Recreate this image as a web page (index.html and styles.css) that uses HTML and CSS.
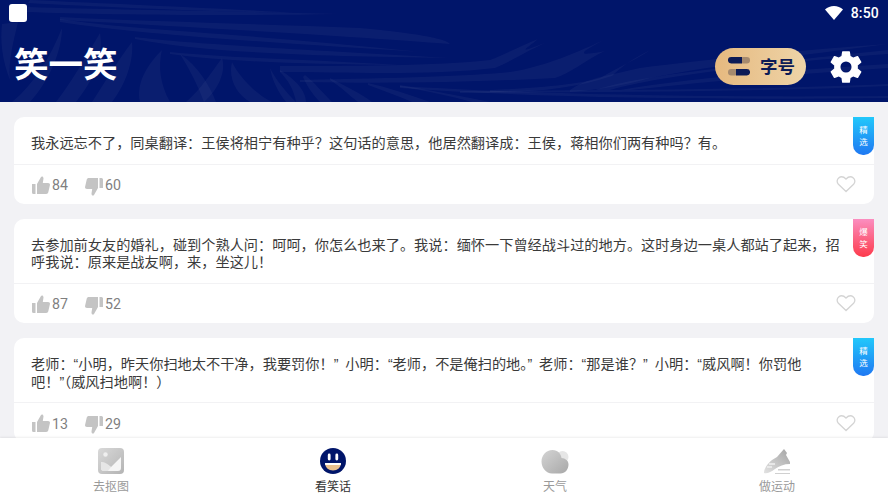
FILE: index.html
```html
<!DOCTYPE html>
<html lang="zh-CN">
<head>
<meta charset="utf-8">
<title>笑一笑</title>
<link rel="stylesheet" href="styles.css">
</head>
<body>
<div class="app">
  <header class="header">
    <svg class="header-art" viewBox="0 0 888 102" preserveAspectRatio="none" aria-hidden="true">
      <g fill="#fff" fill-opacity=".04">
        <path d="M30 0 C120 4 230 9 300 13 C220 12 100 7 28 3Z"/>
        <path d="M28 7 C120 10 240 11 340 14 C240 16 100 15 27 12Z"/>
        <path d="M60 17 C160 22 270 24 360 28 C450 36 450 44 450 44 C400 40 250 30 60 20Z"/>
        <path d="M60 19 C130 30 230 32 420 52 C300 44 150 36 60 22Z"/>
        <path d="M135 37 C190 44 280 48 450 58 C300 56 200 52 135 39Z"/>
        <path d="M170 52 C230 58 300 59 400 65 C300 64 230 62 170 54Z"/>
        <path d="M280 66 C340 66 440 66 490 60 C510 52 525 44 538 39 C525 50 515 54 545 43 C525 52 510 62 495 68 C430 76 340 72 280 72Z"/>
        <path d="M300 80 C400 78 470 76 510 72 C550 66 590 46 604 40 C585 50 570 58 605 51 C585 60 570 74 555 78 C480 82 400 84 300 82Z"/>
        <path d="M490 90 C540 88 580 84 600 78 C620 66 640 58 650 50 C630 60 620 68 612 76 C570 90 530 92 490 92Z"/>
        <path d="M570 90 C585 80 595 78 640 68 C700 60 800 50 888 44 C800 56 720 64 650 78 C630 84 600 90 570 92Z"/>
        <path d="M595 90 C640 76 700 70 888 50 L888 54 C760 64 660 76 610 90Z"/>
        <path d="M620 90 C700 76 800 70 888 64 L888 68 C800 74 720 80 630 90Z"/>
        <path d="M460 91 C600 90 760 90 888 84 L888 86 C760 92 620 92 460 93Z"/>
        <path d="M400 86 C500 92 650 98 888 96 L888 98 C700 100 540 98 400 88Z"/>
        <path d="M280 70 C300 82 306 94 306 102 L296 102 C294 90 288 80 280 72Z"/>
        <path d="M305 75 C316 84 322 92 332 102 L320 102 C312 94 306 84 303 77Z"/>
        <path d="M330 78 C345 86 362 94 372 102 L358 102 C350 96 340 86 330 80Z"/>
        <path d="M368 83 C390 88 410 95 430 102 L412 102 C398 96 382 90 368 85Z"/>
        <path d="M400 85 C430 90 460 96 490 102 L472 102 C450 96 424 90 400 87Z"/>
        <path d="M2 24 L18 22 C14 40 8 60 10 80 C2 60 0 40 2 24Z"/>
        <path d="M62 28 C50 58 34 84 12 102 L30 102 C50 80 62 50 62 28Z"/>
        <path d="M100 33 C84 60 70 84 56 102 L76 102 C94 80 104 55 100 33Z"/>
        <path d="M132 42 C118 60 104 84 92 102 L112 102 C126 84 134 60 132 42Z"/>
        <path d="M162 50 C146 66 136 84 140 102 L170 102 C160 84 158 66 162 50Z"/>
        <path d="M180 54 C190 70 198 86 204 102 L216 102 C210 86 198 66 180 54Z"/>
        <path d="M222 58 C210 74 202 88 186 102 L204 102 C220 88 226 70 222 58Z"/>
        <path d="M232 62 C228 78 236 94 250 102 L272 102 C256 94 240 78 232 62Z"/>
        <path d="M270 68 C276 80 286 92 296 102 L286 102 C278 92 272 80 270 68Z"/>
      </g>
    </svg>
    <div class="status">
      <span class="status-app"></span>
      <div class="status-right">
        <svg class="wifi" viewBox="0 0 18 14" aria-hidden="true"><path d="M0 3.400C2.400 1.300 5.600 0 9 0s6.600 1.300 9 3.400L9 14Z" fill="#fff"/></svg>
        <span class="clock">8:50</span>
      </div>
    </div>
    <div class="title-row">
      <h1 class="title">笑一笑</h1>
      <div class="title-actions">
        <button class="font-btn">
          <svg class="font-ico" viewBox="0 0 22 19" aria-hidden="true">
            <rect x="12" y="0" width="10" height="6.500" rx="3.200" fill="#a68a6e"/>
            <path d="M3.200 0H14v6.500H3.200a3.200 3.200 0 0 1 0-6.500Z" fill="#0d1b56"/>
            <rect x="0" y="12" width="10" height="6.500" rx="3.200" fill="#a68a6e"/>
            <path d="M8 12h10.800a3.200 3.200 0 0 1 0 6.500H8Z" fill="#0d1b56"/>
          </svg>
          <span>字号</span>
        </button>
        <svg class="gear" viewBox="0 0 24 24" aria-hidden="true"><path fill="#fff" d="M19.430 12.980c.04-.32.070-.64.070-.98s-.03-.66-.07-.98l2.110-1.650a.5.5 0 0 0 .12-.64l-2-3.460a.5.5 0 0 0-.61-.22l-2.490 1a7.300 7.300 0 0 0-1.690-.98l-.38-2.650A.49.49 0 0 0 14 2h-4a.49.49 0 0 0-.49.420l-.38 2.650c-.61.250-1.170.590-1.690.980l-2.490-1a.5.5 0 0 0-.61.220l-2 3.460a.49.49 0 0 0 .12.640l2.110 1.650c-.04.320-.07.650-.07.980s.03.660.07.980l-2.110 1.650a.5.5 0 0 0-.12.640l2 3.460c.12.220.39.300.61.220l2.490-1c.52.400 1.080.730 1.690.980l.38 2.650c.03.240.24.420.49.420h4c.25 0 .46-.18.490-.42l.38-2.650c.61-.25 1.170-.59 1.690-.98l2.490 1c.23.090.49 0 .61-.22l2-3.460a.5.5 0 0 0-.12-.64ZM12 15.500a3.500 3.500 0 1 1 0-7 3.500 3.500 0 0 1 0 7Z"/></svg>
      </div>
    </div>
  </header>

  <main class="list">
    <article class="card">
      <span class="tag tag-blue">精选</span>
      <p class="joke">我永远忘不了，同桌翻译：王侯将相宁有种乎？这句话的意思，他居然翻译成：王侯，蒋相你们两有种吗？有。</p>
      <div class="actions">
        <span class="vote"><svg class="thumb thumb-up" viewBox="0 0 18 18" aria-hidden="true"><path d="M0 8h3.500v10H1.500A1.500 1.500 0 0 1 0 16.500ZM5 8l4-7c.4-1 2.500-1 2.500 1.500L10.800 7h5.200c1.500 0 2.200 1 1.900 2.300l-1.600 7C16 17.400 15.300 18 14.200 18H5Z"/></svg>84</span>
        <span class="vote"><svg class="thumb thumb-down" viewBox="0 0 18 18" aria-hidden="true"><path d="M18 10h-3.500V0h2A1.500 1.500 0 0 1 18 1.500ZM13 10l-4 7c-.4 1-2.500 1-2.500-1.500L7.200 11H2C.5 11-.2 10 .1 8.700l1.600-7C2 .6 2.700 0 3.800 0H13Z"/></svg>60</span>
        <svg class="heart" viewBox="0 0 20 18" aria-hidden="true"><path d="M10 16.500 2.400 9.200C-1.500 5 4.500-1.500 10 4c5.500-5.500 11.500 1 7.600 5.200Z"/></svg>
      </div>
    </article>

    <article class="card">
      <span class="tag tag-red">爆笑</span>
      <p class="joke">去参加前女友的婚礼，碰到个熟人问：呵呵，你怎么也来了。我说：缅怀一下曾经战斗过的地方。这时身边一桌人都站了起来，招呼我说：原来是战友啊，来，坐这儿！</p>
      <div class="actions">
        <span class="vote"><svg class="thumb thumb-up" viewBox="0 0 18 18" aria-hidden="true"><path d="M0 8h3.500v10H1.500A1.500 1.500 0 0 1 0 16.500ZM5 8l4-7c.4-1 2.500-1 2.500 1.500L10.800 7h5.200c1.500 0 2.200 1 1.900 2.300l-1.600 7C16 17.400 15.300 18 14.200 18H5Z"/></svg>87</span>
        <span class="vote"><svg class="thumb thumb-down" viewBox="0 0 18 18" aria-hidden="true"><path d="M18 10h-3.500V0h2A1.500 1.500 0 0 1 18 1.500ZM13 10l-4 7c-.4 1-2.500 1-2.500-1.500L7.200 11H2C.5 11-.2 10 .1 8.700l1.600-7C2 .6 2.700 0 3.800 0H13Z"/></svg>52</span>
        <svg class="heart" viewBox="0 0 20 18" aria-hidden="true"><path d="M10 16.500 2.400 9.200C-1.500 5 4.500-1.500 10 4c5.500-5.500 11.500 1 7.600 5.200Z"/></svg>
      </div>
    </article>

    <article class="card">
      <span class="tag tag-blue">精选</span>
      <p class="joke">老师：“小明，昨天你扫地太不干净，我要罚你！” 小明：“老师，不是俺扫的地。” 老师：“那是谁？” 小明：“威风啊！你罚他<br>吧！”（威风扫地啊！）</p>
      <div class="actions">
        <span class="vote"><svg class="thumb thumb-up" viewBox="0 0 18 18" aria-hidden="true"><path d="M0 8h3.500v10H1.500A1.500 1.500 0 0 1 0 16.500ZM5 8l4-7c.4-1 2.500-1 2.500 1.500L10.800 7h5.200c1.500 0 2.200 1 1.900 2.300l-1.600 7C16 17.400 15.300 18 14.200 18H5Z"/></svg>13</span>
        <span class="vote"><svg class="thumb thumb-down" viewBox="0 0 18 18" aria-hidden="true"><path d="M18 10h-3.500V0h2A1.500 1.500 0 0 1 18 1.500ZM13 10l-4 7c-.4 1-2.500 1-2.500-1.500L7.200 11H2C.5 11-.2 10 .1 8.700l1.600-7C2 .6 2.700 0 3.800 0H13Z"/></svg>29</span>
        <svg class="heart" viewBox="0 0 20 18" aria-hidden="true"><path d="M10 16.500 2.400 9.200C-1.500 5 4.500-1.500 10 4c5.500-5.500 11.500 1 7.600 5.200Z"/></svg>
      </div>
    </article>
  </main>

  <nav class="tabs">
    <div class="tab">
      <svg class="tab-ico" viewBox="0 0 26 26" aria-hidden="true">
        <defs><linearGradient id="g1" x1="0" y1="0" x2="1" y2="1"><stop offset="0" stop-color="#d9d9d9"/><stop offset="1" stop-color="#b4b4b4"/></linearGradient></defs>
        <rect width="26" height="26" rx="4" fill="url(#g1)"/>
        <circle cx="7.500" cy="6.500" r="2.200" fill="#efefef"/>
        <path d="M3 14l10 5 10-10v11a3 3 0 0 1-3 3H6a3 3 0 0 1-3-3Z" fill="#f5f5f5"/>
        <path d="M3 14c4 0 7 2 10 5l-3 4H6a3 3 0 0 1-3-3Z" fill="#e6e6e6"/>
      </svg>
      <span>去抠图</span>
    </div>
    <div class="tab tab-on">
      <svg class="tab-ico" viewBox="0 0 26 26" aria-hidden="true">
        <circle cx="13" cy="13" r="13" fill="#00156a"/>
        <rect x="7.800" y="5.500" width="2.800" height="7" rx="1.400" fill="#fff"/>
        <rect x="15.400" y="5.500" width="2.800" height="7" rx="1.400" fill="#fff"/>
        <path d="M5 15h16c0 4.500-3.500 7.500-8 7.500S5 19.500 5 15Z" fill="#e8c08e"/>
        <path d="M5 15h16c0 .8-.1 1.400-.3 2H5.300C5.100 16.400 5 15.800 5 15Z" fill="#fff"/>
      </svg>
      <span>看笑话</span>
    </div>
    <div class="tab">
      <svg class="tab-ico tab-ico-w" viewBox="0 0 28 26" aria-hidden="true">
        <defs><linearGradient id="g2" x1="0" y1="0" x2="1" y2="1"><stop offset="0" stop-color="#d4d4d4"/><stop offset="1" stop-color="#a8a8a8"/></linearGradient></defs>
        <circle cx="21.500" cy="9" r="6" fill="#e6e6e6"/>
        <path d="M11.500 2C17 2 20 6 20.500 10c3.800.4 7 2.500 7 6.500 0 5-3.500 9-8 9H11C5 25.500.5 19.500.5 13.500S5 2 11.500 2Z" fill="url(#g2)"/>
      </svg>
      <span>天气</span>
    </div>
    <div class="tab">
      <svg class="tab-ico tab-ico-w" viewBox="0 0 28 26" aria-hidden="true">
        <defs><linearGradient id="g3" x1="0" y1="1" x2="1" y2="0"><stop offset="0" stop-color="#e2e2e2"/><stop offset="1" stop-color="#a4a4a4"/></linearGradient></defs>
        <path d="M1 25C1 21 4 16 9 12l5-3 7-8 3 4-1 2 4 7v2c-6 0-11 2-15 5-4 3-8 5-11 4Z" fill="url(#g3)"/>
        <path d="M6 16h6M4 19h5" stroke="#f1f1f1" stroke-width="1.300"/>
        <path d="M15 21h12v1.500H15ZM12 25h15v1H12Z" fill="#d0d0d0"/>
      </svg>
      <span>做运动</span>
    </div>
  </nav>
</div>
</body>
</html>
```
FILE: styles.css
```css
* { box-sizing: border-box; }
html, body { margin: 0; padding: 0; }
body {
  font-family: Roboto, "Noto Sans CJK SC", sans-serif;
  background: #f2f2f5;
}
.app {
  width: 888px;
  height: 500px;
  display: flex;
  flex-direction: column;
  overflow: hidden;
}
.header {
  position: relative;
  flex: none;
  height: 102px;
  background: #00156a;
  color: #fff;
  padding: 0 26px 0 9px;
}
.header-art {
  position: absolute;
  left: 0;
  top: 0;
  width: 100%;
  height: 100%;
}
.status {
  position: relative;
  height: 26px;
  display: flex;
  align-items: center;
  justify-content: space-between;
  margin-right: -18px;
}
.status-app {
  width: 18px;
  height: 18px;
  background: #fff;
  border-radius: 3px;
}
.status-right {
  display: flex;
  align-items: center;
  gap: 8px;
}
.wifi { width: 18px; height: 14px; }
.clock {
  font-size: 14px;
  font-weight: 500;
  margin-right: 1px;
  letter-spacing: .2px;
}
.title-row {
  position: relative;
  height: 76px;
  padding-left: 5px;
  display: flex;
  align-items: center;
  justify-content: space-between;
}
.title {
  margin: 2px 0 0;
  font-size: 34.500px;
  font-weight: 700;
  line-height: 1;
}
.title-actions {
  display: flex;
  align-items: center;
  gap: 21px;
  margin-top: 5px;
}
.font-btn {
  width: 91px;
  height: 37px;
  border: 0;
  border-radius: 19px;
  padding: 0 0 2px 13px;
  display: flex;
  align-items: center;
  gap: 10px;
  background: linear-gradient(90deg, #e6b97f, #eed4a8);
  color: #0d1b56;
  font: 700 17.500px "Noto Sans CJK SC", sans-serif;
}
.font-ico { width: 22px; height: 19px; margin-top: 2px; }
.gear { width: 38px; height: 38px; margin-right: -3px; }
.list {
  flex: 1;
  min-height: 0;
  overflow: hidden;
  padding: 15px 14px 0;
  display: flex;
  flex-direction: column;
  gap: 15px;
}
.card {
  position: relative;
  flex: none;
  background: #fff;
  border-radius: 10px;
}
.joke {
  margin: 0;
  padding: 18px 30px 11px 17px;
  font-family: "Liberation Sans", "Noto Sans CJK SC", sans-serif;
  font-size: 14.200px;
  line-height: 17.500px;
  word-spacing: 3px;
  color: #3a3a3a;
  border-bottom: 1px solid #f2f2f4;
}
.actions {
  height: 39.250px;
  padding: 2px 18px 0;
  display: flex;
  align-items: center;
  gap: 17px;
}
.vote {
  display: flex;
  align-items: center;
  gap: 2px;
  font-size: 14.200px;
  color: #7f7f7f;
}
.thumb { width: 18px; height: 18px; fill: #c4c4c4; }
.thumb-up { margin-top: -1px; }
.thumb-down { margin-top: 3px; }
.heart {
  width: 20px;
  height: 18px;
  margin: -2px 0 0 auto;
  fill: none;
  stroke: #d4d4d4;
  stroke-width: 1.300;
}
.tag {
  position: absolute;
  top: 0;
  right: 0;
  width: 21px;
  height: 38px;
  padding: 7px 4px 0;
  border-radius: 0 0 10px 10px;
  font-size: 8.500px;
  line-height: 12px;
  text-align: center;
  color: #fff;
}
.tag-blue { background: linear-gradient(180deg, #22c8fb, #1f78f2); }
.tag-red { background: linear-gradient(180deg, #fb8ec0, #fd3b4c); }
.tabs {
  flex: none;
  height: 62px;
  background: #fff;
  box-shadow: 0 -1px 2px rgba(0, 0, 0, .07);
  position: relative;
  display: grid;
  grid-template-columns: repeat(4, 1fr);
}
.tab {
  display: flex;
  flex-direction: column;
  align-items: center;
  padding-top: 10px;
  gap: 5px;
  font-size: 12px;
  line-height: 16px;
  color: #9a9a9a;
}
.tab-on { color: #333; }
.tab-ico { width: 26px; height: 26px; }
.tab-ico-w { width: 28px; height: 26px; }
```
